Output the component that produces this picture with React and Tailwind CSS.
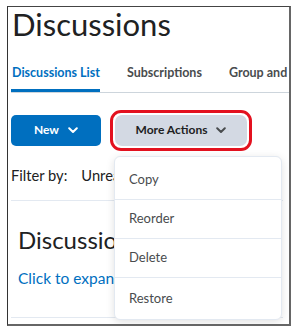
import React from "react";

const Chevron = ({ className = "", color = "currentColor" }) => (
  <svg width="10" height="7" viewBox="0 0 10 7" className={className}>
    <path d="M1.2 1.3 L5 5 L8.8 1.3" fill="none" stroke={color} strokeWidth="2" strokeLinecap="round" strokeLinejoin="round" />
  </svg>
);

export default function App() {
  return (
    <div className="w-[298px] h-[333px] bg-white pl-[7px] pt-[6px]" style={{ fontFamily: "Lato, 'Noto Sans', sans-serif" }}>
      <div className="relative w-[284px] h-[320px] border-l border-t border-l-[#333] border-t-[#444] border-r-2 border-b-2 border-r-[#666] border-b-[#666] overflow-hidden pl-[3px]">
        <h1 className="text-[31px] leading-[36px] text-[#202122] pl-[1px] mt-[-1px]">Discussions</h1>
        <div className="mt-[22px] flex text-[12.5px] font-bold border-b border-[#cdd5dc] whitespace-nowrap">
          <div className="text-[#006fbf] border-b-[3px] border-[#006fbf] pb-[6px] pl-[1px]">Discussions List</div>
          <div className="ml-[27px] text-[#494c4e]">Subscriptions</div>
          <div className="ml-[27px] text-[#494c4e]">Group and</div>
        </div>
        <div className="mt-[17px] flex items-center">
          <button className="w-[90px] h-[31px] rounded-[5px] bg-[#006fbf] text-white text-[12px] font-bold flex items-center justify-center gap-[9px]">
            New <Chevron color="#fff" />
          </button>
          <div className="ml-[9px] p-[2px] rounded-[11px] border-[3px] border-[#e3111f]">
            <button className="w-[132px] h-[31px] rounded-[7px] bg-[#d3d9e3] text-[#202122] text-[12px] font-bold flex items-center justify-center gap-[9px]">
              More Actions <Chevron color="#494c4e" />
            </button>
          </div>
        </div>
        <div className="mt-[14px] flex text-[14.7px] leading-[20px] text-[#202122] pb-[15px] border-b border-[#e3e9f1] mr-[6px]">
          <span>Filter by:</span>
          <span className="ml-[14px]">Unread</span>
        </div>
        <div className="pl-[7px] mt-[25px] text-[24px] leading-[28px] text-[#202122]">Discussions</div>
        <div className="pl-[7px] mt-[14px] text-[15.5px] leading-[20px] text-[#006fbf]">Click to expand</div>
        <div className="mt-[29px] border-b border-[#e3e9f1] mr-[6px]"></div>
        <div className="absolute left-[106px] top-[149px] w-[168px] h-[164px] bg-white rounded-[6px] border border-[#e3e9f1] shadow-[0_2px_8px_rgba(0,0,0,0.12)] text-[13px] text-[#494c4e] flex flex-col">
          <div className="h-[43px] flex items-center pl-[14px] pt-[4px] border-b border-[#e3e9f1]">Copy</div>
          <div className="h-[39px] flex items-center pl-[14px] border-b border-[#e3e9f1]">Reorder</div>
          <div className="h-[39px] flex items-center pl-[14px] border-b border-[#e3e9f1]">Delete</div>
          <div className="flex-1 flex items-center pl-[14px]">Restore</div>
        </div>
      </div>
    </div>
  );
}
